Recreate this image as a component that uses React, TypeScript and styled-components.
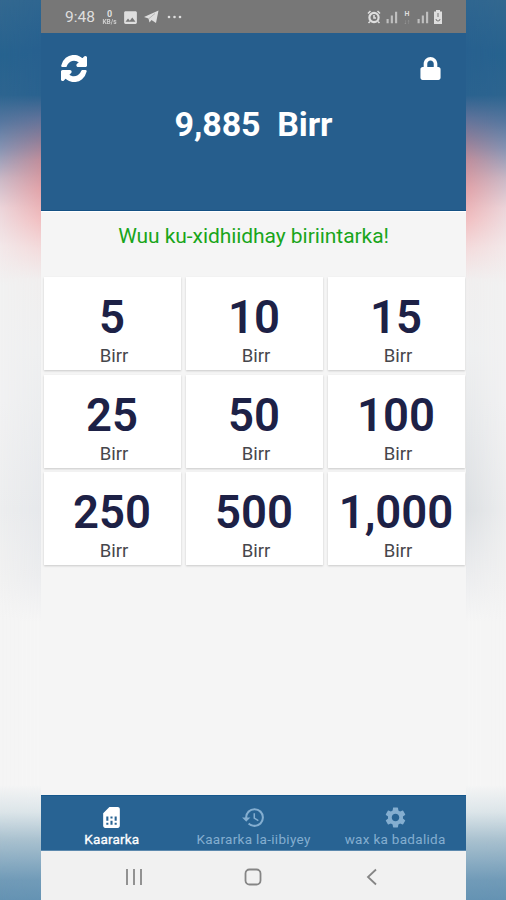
import React from 'react';
import styled, { createGlobalStyle } from 'styled-components';
import { FaLock } from 'react-icons/fa';
import { MdHistory, MdSettings, MdSimCard, MdImage, MdAlarm, MdSignalCellularAlt } from 'react-icons/md';

const GlobalStyle = createGlobalStyle`
  * { box-sizing: border-box; }
  body { margin: 0; font-family: Roboto, "Liberation Sans", sans-serif; }
`;

const Backdrop = styled.div`
  display: grid;
  grid-template-columns: 41px 425px 40px;
  width: 506px;
  height: 900px;
  overflow: hidden;
  background: #f5f5f5;
`;

const Side = styled.div<{ $side: 'left' | 'right' }>`
  display: grid;
  background: linear-gradient(to bottom, #336890 0, #27638f 55px, #2d6590 95px, #5778a0 122px, #8593b3 148px,
    #c9b8c6 178px, #ecd5da 208px, #f3e8e9 245px, #f2f2f2 285px, #f2f2f3 400px,
    #edeeef 510px, #f2f2f2 580px, #f5f5f5 620px, #f5f5f5 785px, #dce5e9 812px,
    #a9c1cf 840px, #719bb8 880px, #6593b3 900px);
  &::after {
    content: '';
    background: linear-gradient(to bottom, #2f6690 0, #27608f 50px, #2a628f 95px, #5f7299 118px, #8c7d98 138px,
      #c08e9b 160px, #e0a2a8 188px, #f1bfc1 220px, #f3dadb 248px, #f0eeee 280px, #eeeff0 350px,
      ${p => (p.$side === 'left' ? '#e6e8eb' : '#dcdfe2')} 510px, #ebecee 575px,
      #f5f5f5 622px, #f5f5f5 785px, #dce5e9 812px, #a9c1cf 840px, #719bb8 880px, #6593b3 900px);
    mask-image: linear-gradient(to ${p => p.$side}, #000, transparent);
  }
`;

const Phone = styled.main`
  display: grid;
  grid-template-rows: 33px 178px 66px 289px 1fr 56px 49px;
  height: 900px;
  background: #f5f5f5;
`;

const StatusBar = styled.div`
  display: flex;
  align-items: center;
  justify-content: space-between;
  padding: 1px 23px 0 24px;
  background: #777;
  color: #dedede;
`;

const StatusGroup = styled.div<{ $gap: number }>`
  display: flex;
  align-items: center;
  gap: ${p => p.$gap}px;
`;

const Clock = styled.span`
  font-size: 15.5px;
  width: 32px;
`;

const Speed = styled.span<{ $dim?: boolean }>`
  display: flex;
  flex-direction: column;
  align-items: center;
  width: ${p => (p.$dim ? 10 : 15)}px;
  font-size: ${p => (p.$dim ? 7 : 9)}px;
  font-weight: 700;
  line-height: 10px;
`;

const SpeedUnit = styled.span<{ $dim?: boolean }>`
  font-size: 6.5px;
  line-height: 7px;
  opacity: ${p => (p.$dim ? 0.4 : 0.85)};
`;

const Header = styled.header`
  background: #265e8d;
  color: #fff;
  border-bottom: 1px solid #145184;
`;

const Actions = styled.div`
  display: flex;
  justify-content: space-between;
  align-items: center;
  height: 70px;
  padding: 0 24px 0 20px;
`;

const IconButton = styled.button`
  display: flex;
  padding: 0;
  border: 0;
  background: none;
  color: #fff;
`;

const Balance = styled.h1`
  margin: 0;
  text-align: center;
  white-space: pre;
  font-size: 34px;
  line-height: 42px;
  font-weight: 700;
  letter-spacing: -0.1px;
`;

const Notice = styled.p`
  margin: 0;
  padding-top: 12px;
  text-align: center;
  color: #19a51b;
  font-size: 21px;
  letter-spacing: -0.06px;
  line-height: 25px;
  border-top: 1px solid #fff;
`;

const Cards = styled.section`
  display: grid;
  grid-template-columns: repeat(3, 137px);
  grid-auto-rows: 93px;
  gap: 4.5px 5px;
  padding: 0 1px 0 3px;
`;

const Card = styled.button`
  display: flex;
  flex-direction: column;
  align-items: center;
  padding: 18px 0 0;
  border: 0;
  background: #fff;
  color: #1d2146;
  font-family: inherit;
  box-shadow: 0 1px 2px rgba(0, 0, 0, 0.18);
`;

const Amount = styled.strong`
  margin-right: 1px;
  font-size: 45.5px;
  line-height: 46px;
  font-weight: 600;
`;

const Currency = styled.span`
  margin-left: 3px;
  padding-top: 5px;
  font-size: 18.5px;
  line-height: 20px;
  color: #46464b;
`;

const Tabs = styled.nav`
  display: grid;
  grid-template-columns: repeat(3, 1fr);
  background: #286393;
  border-top: 1px solid #15578c;
  border-bottom: 1px solid #5c89ae;
`;

const Tab = styled.button<{ $active?: boolean }>`
  display: flex;
  flex-direction: column;
  align-items: center;
  gap: 1px;
  padding: 9px 0 0;
  border: 0;
  background: none;
  color: ${p => (p.$active ? '#fff' : '#84aed0')};
  font-family: inherit;
  font-size: 13.5px;
  line-height: 17px;
  letter-spacing: ${p => (p.$active ? 0.2 : 0.3)}px;
  white-space: nowrap;
  -webkit-text-stroke: ${p => (p.$active ? '0.3px' : '0')};
`;

const SystemBar = styled.div`
  display: grid;
  grid-template-columns: 186px 51px 188px;
  align-items: center;
  justify-items: center;
  background: #f1f1f1;
  padding-top: 2px;
`;

const amounts = ['5', '10', '15', '25', '50', '100', '250', '500', '1,000'];

export default function App() {
  return (
    <Backdrop>
      <GlobalStyle />
      <Side $side="left" />
      <Phone>
        <StatusBar>
          <StatusGroup $gap={5}>
            <Clock>9:48</Clock>
            <Speed>0<SpeedUnit>KB/s</SpeedUnit></Speed>
            <MdImage size={17} />
            <svg width="15" height="14" viewBox="0 0 15 14" fill="currentColor">
              <path d="M0 7 14.5.5 12 13 7.5 10 5.5 12.5 4.5 8.5Z" />
              <path d="m5 8.5 6-5" stroke="#777" strokeWidth=".4" />
            </svg>
            <svg width="23" height="4" viewBox="0 0 23 4" fill="currentColor">
              <circle cx="5" cy="2" r="1.3" /><circle cx="10.5" cy="2" r="1.3" /><circle cx="16" cy="2" r="1.3" />
            </svg>
          </StatusGroup>
          <StatusGroup $gap={2}>
            <svg width="14" height="14" viewBox="0 0 14 14" fill="none" stroke="currentColor">
              <circle cx="7" cy="7.500" r="4.600" strokeWidth="2.200" />
              <path d="M7 5v3h2M1 3.500 3.500 1M13 3.500 10.500 1M3 11.500 1.500 13M11 11.500l1.500 1.500" strokeWidth="1.600" />
            </svg>
            <MdSignalCellularAlt size={17} opacity={0.7} />
            <Speed $dim>H<SpeedUnit $dim>↓↑</SpeedUnit></Speed>
            <MdSignalCellularAlt size={17} opacity={0.7} />
            <svg width="10" height="14" viewBox="0 0 10 14" fill="currentColor">
              <path d="M3 0h4v1.5h2V14H1V1.5h2Z" />
              <path d="M5 3v4M3 9a2 2 0 1 0 4 0" fill="none" stroke="#777" />
            </svg>
          </StatusGroup>
        </StatusBar>
        <Header>
          <Actions>
            <IconButton aria-label="Refresh">
              <svg width="26" height="27" viewBox="-40 -40 1616 1616" preserveAspectRatio="none" fill="currentColor" stroke="currentColor" strokeWidth="90">
                <path d="M1511 928q0 5-1 7-64 268-268 434.500T764 1536q-146 0-282.500-55T238 1324l-129 129q-19 19-45 19t-45-19-19-45V960q0-26 19-45t45-19h448q26 0 45 19t19 45-19 45l-137 137q71 66 161 102t187 36q134 0 250-65t186-179q11-17 53-117 8-23 30-23h192q13 0 22.500 9.500t9.500 22.500zm25-800v448q0 26-19 45t-45 19h-448q-26 0-45-19t-19-45 19-45l138-138Q969 256 768 256q-134 0-250 65T332 500q-11 17-53 117-8 23-30 23H50q-13 0-22.500-9.500T18 608v-7q65-268 270-434.500T768 0q146 0 284 55.500T1297 212l130-129q19-19 45-19t45 19 19 45z" />
              </svg>
            </IconButton>
            <IconButton aria-label="Lock"><FaLock size={23} /></IconButton>
          </Actions>
          <Balance>{'9,885  Birr'}</Balance>
        </Header>
        <Notice>Wuu ku-xidhiidhay biriintarka!</Notice>
        <Cards>
          {amounts.map(amount => (
            <Card key={amount}>
              <Amount>{amount}</Amount>
              <Currency>Birr</Currency>
            </Card>
          ))}
        </Cards>
        <div />
        <Tabs>
          <Tab $active><MdSimCard size={25} />Kaararka</Tab>
          <Tab><MdHistory size={25} />Kaararka la-iibiyey</Tab>
          <Tab><MdSettings size={25} />wax ka badalida</Tab>
        </Tabs>
        <SystemBar>
          <svg width="18" height="18" viewBox="0 0 18 18" stroke="#929292" strokeWidth="2">
            <path d="M2 1v16M9 1v16M16 1v16" />
          </svg>
          <svg width="18" height="18" viewBox="0 0 18 18" fill="none" stroke="#858585" strokeWidth="1.8">
            <rect x="1.5" y="1.5" width="15" height="15" rx="4" />
          </svg>
          <svg width="12" height="18" viewBox="0 0 12 18" fill="none" stroke="#858585" strokeWidth="1.8">
            <path d="M10 1.5 2 9l8 7.5" />
          </svg>
        </SystemBar>
      </Phone>
      <Side $side="right" />
    </Backdrop>
  );
}
